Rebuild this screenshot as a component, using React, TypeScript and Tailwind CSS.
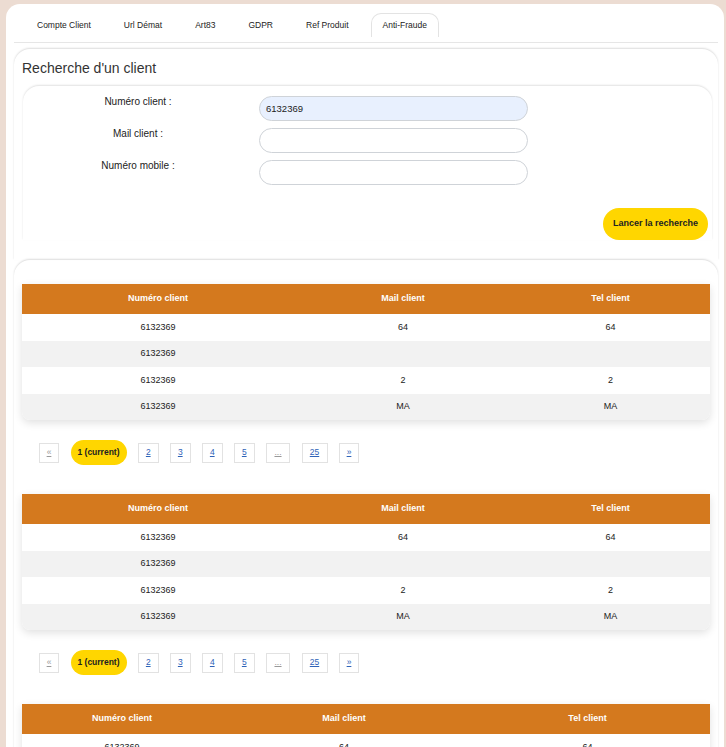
const tabs = ['Compte Client', 'Url Démat', 'Art83', 'GDPR', 'Ref Produit', 'Anti-Fraude'];

const rows = [
  ['6132369', '64', '64'],
  ['6132369', '', ''],
  ['6132369', '2', '2'],
  ['6132369', 'MA', 'MA'],
];

const pages = ['2', '3', '4', '5'];

function ResultTable({ cols, data }: { cols: string; data: string[][] }) {
  return (
    <div className="mx-[8px] rounded-b-lg bg-white shadow-[0_3px_8px_rgba(0,0,0,0.12)]">
      <div className={`grid ${cols} h-[30px] items-center bg-[#d4791e] text-[9px] font-bold text-white`}>
        <div className="text-center">Numéro client</div>
        <div className="text-center">Mail client</div>
        <div className="text-center">Tel client</div>
      </div>
      {data.map((r, i) => (
        <div
          key={i}
          className={`grid ${cols} h-[26.5px] items-center text-[9px] text-[#222] ${
            i % 2 === 1 ? 'bg-[#f2f2f2]' : 'bg-white'
          } ${i === data.length - 1 ? 'rounded-b-lg' : ''}`}
        >
          {r.map((c, j) => (
            <div key={j} className="text-center">
              {c}
            </div>
          ))}
        </div>
      ))}
    </div>
  );
}

function Pager() {
  const box = 'flex h-[20px] items-center justify-center border border-[#e2e2e2] bg-white text-[8.5px]';
  return (
    <div className="flex items-center gap-[11.5px] pl-[25px] pt-[20px] pb-[29px]">
      <span className={`${box} w-[20px] text-[#999] underline`}>«</span>
      <span className="flex h-[25px] w-[56px] items-center justify-center rounded-full bg-[#ffd600] text-[8.5px] font-bold text-[#222]">
        1 (current)
      </span>
      {pages.map((p) => (
        <span key={p} className={`${box} w-[20.5px] text-[#2f63b8] underline`}>
          {p}
        </span>
      ))}
      <span className={`${box} w-[24px] text-[#999] underline`}>...</span>
      <span className={`${box} w-[26px] text-[#2f63b8] underline`}>25</span>
      <span className={`${box} w-[20px] text-[#2f63b8] underline`}>»</span>
    </div>
  );
}

export default function App() {
  return (
    <div className="min-h-screen bg-[#ecdcd2] pl-[6px] pr-[2px] pt-[4px] font-['Liberation_Sans',Arial,sans-serif]">
      <div className="min-h-[743px] rounded-t-[14px] bg-white pl-[8px] pr-[6px]">
        {/* onglets */}
        <div className="flex h-[39px] items-start gap-[11px] border-b border-[#e6e6e6] pl-[12px] pt-[9px]">
          {tabs.map((t) => (
            <div
              key={t}
              className={`flex h-[24px] items-center px-[11px] text-[8.5px] text-[#222] ${
                t === 'Anti-Fraude' ? 'rounded-t-[10px] border border-b-0 border-[#e3e3e3]' : ''
              }`}
            >
              {t}
            </div>
          ))}
        </div>

        {/* recherche */}
        <div className="mt-[6px] rounded-t-[16px] pb-[20px] shadow-[0_-1px_2px_rgba(0,0,0,0.14)]">
          <h2 className="pl-[8px] pt-[10px] text-[14px] leading-[18px] text-[#333]">Recherche d'un client</h2>
          <div className="ml-[9px] mr-[6px] mt-[9px] rounded-t-[16px] pt-[10px] shadow-[0_-1px_2px_rgba(0,0,0,0.12)]">
            <div className="flex flex-col gap-[7px]">
              {[
                ['Numéro client :', '6132369'],
                ['Mail client :', ''],
                ['Numéro mobile :', ''],
              ].map(([label, val]) => (
                <div key={label} className="flex items-start gap-[6px]">
                  <label className="w-[230px] text-center text-[10px] leading-[12px] text-[#222]">{label}</label>
                  <input
                    readOnly
                    value={val}
                    className={`h-[25px] w-[269px] rounded-full border border-[#cfd3d8] px-[6px] text-[9.5px] text-[#222] outline-none ${
                      val ? 'bg-[#e8f0fe]' : 'bg-white'
                    }`}
                  />
                </div>
              ))}
            </div>
            <div className="mt-[23px] flex justify-end pr-[4px]">
              <button className="h-[32px] w-[105px] rounded-full bg-[#ffd600] text-[9px] font-bold text-[#222]">
                Lancer la recherche
              </button>
            </div>
          </div>
        </div>

        {/* résultats */}
        <div className="rounded-t-[16px] pt-[24px] shadow-[0_-1px_2px_rgba(0,0,0,0.14)]">
          <ResultTable cols="grid-cols-[272px_218px_197px]" data={rows} />
          <Pager />
          <ResultTable cols="grid-cols-[272px_218px_197px]" data={rows} />
          <Pager />
          <ResultTable cols="grid-cols-[200px_244px_243px]" data={rows} />
        </div>
      </div>
    </div>
  );
}
